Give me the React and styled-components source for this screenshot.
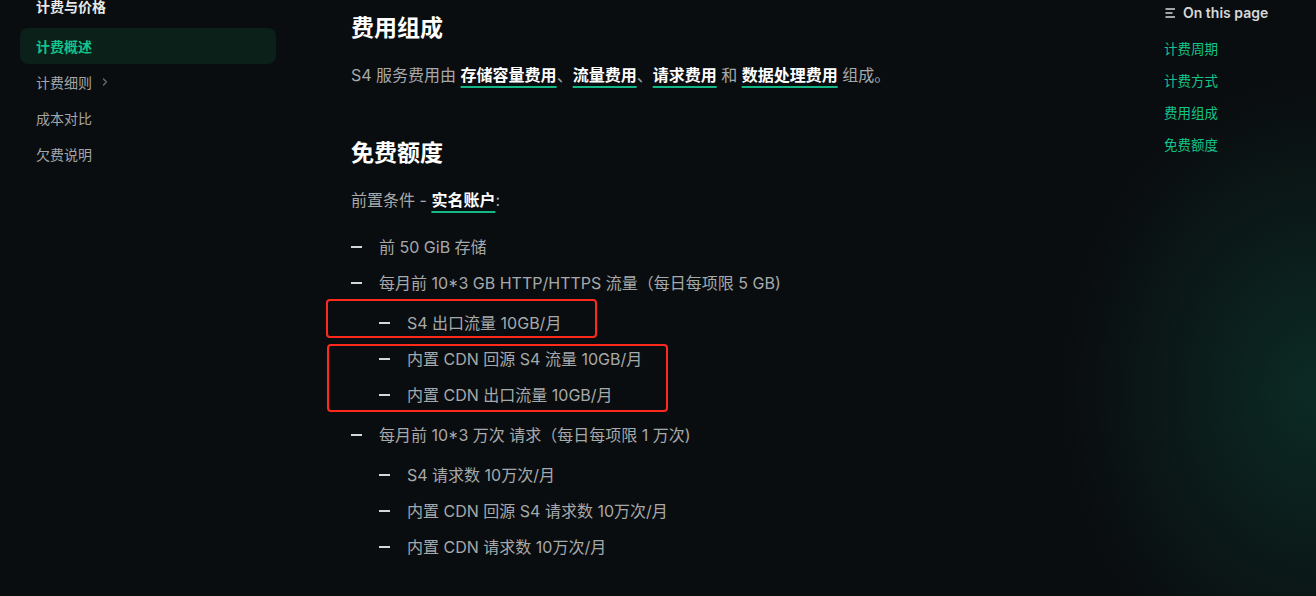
import React from "react";
import styled, { createGlobalStyle } from "styled-components";

const GlobalStyle = createGlobalStyle`
  html, body {
    margin: 0;
    padding: 0;
    background: #0a0d0f;
    overflow: hidden;
  }
  body {
    font-family: Inter, "Noto Sans CJK SC", sans-serif;
    color: #a6a9ab;
  }
  * { box-sizing: border-box; }
`;

const Page = styled.div`
  position: relative;
  width: 1316px;
  height: 596px;
  overflow: hidden;
  background:
    radial-gradient(ellipse 250px 310px at 1316px 390px, rgba(12, 44, 37, 0.95), rgba(10, 13, 15, 0) 100%),
    #0a0d0f;
  display: grid;
  grid-template-columns: 276px 1fr 152px;
`;

/**
 * SIDEBAR
 */

const Sidebar = styled.nav`
  padding-left: 20px;
  margin-top: -3px;
`;

const SideHeading = styled.div`
  font-size: 14px;
  line-height: 20px;
  font-weight: 700;
  color: #e8e8e8;
  padding-left: 16px;
  margin-bottom: 11px;
`;

const SideItem = styled.div`
  display: flex;
  align-items: center;
  gap: 8px;
  height: 36px;
  padding-left: 16px;
  border-radius: 8px;
  font-size: 14px;
  font-weight: ${(p) => (p.active ? 700 : 400)};
  color: ${(p) => (p.active ? "#12c48b" : "#a3a6a8")};
  background: ${(p) => (p.active ? "#0a2019" : "transparent")};
`;

const Chevron = () => (
  <svg width="10" height="10" viewBox="0 0 10 10" fill="none">
    <path d="M3.5 2 L6.5 5 L3.5 8" stroke="#6b6f72" strokeWidth="1.3" strokeLinecap="round" strokeLinejoin="round" />
  </svg>
);

/**
 * MAIN
 */

const Main = styled.main`
  position: relative;
  padding-left: 75px;
  padding-top: 12px;
`;

const H2 = styled.h2`
  margin: 0;
  font-size: 23px;
  line-height: 32px;
  font-weight: 700;
  color: #ffffff;
  margin-top: ${(p) => p.gap || 0}px;
`;

const Para = styled.p`
  margin: 17px 0 0;
  font-size: 16px;
  line-height: 28px;
`;

const Strong = styled.a`
  color: #ffffff;
  font-weight: 700;
  text-decoration: underline;
  text-decoration-color: #14b886;
  text-decoration-thickness: 1.5px;
  text-underline-offset: 5px;
`;

const List = styled.ul`
  list-style: none;
  margin: 0;
  padding: ${(p) => (p.nested ? "4px 0 4px 28px" : "11px 0 0")};
`;

const Item = styled.li`
  margin-top: 8px;
  font-size: 16px;
`;

const ItemLine = styled.div`
  display: flex;
  align-items: center;
  line-height: 28px;
  &::before {
    content: "";
    width: 11px;
    height: 2px;
    background: #d4d6d8;
    margin-right: 17px;
    flex: none;
  }
`;

const Annotation = styled.div`
  position: absolute;
  left: ${(p) => p.x}px;
  top: ${(p) => p.y}px;
  width: ${(p) => p.w}px;
  height: ${(p) => p.h}px;
  border: 2px solid #ff2a1c;
  border-radius: 4px;
  pointer-events: none;
`;

/**
 * TOC
 */

const Toc = styled.aside`
  padding-top: 4px;
`;

const TocHeading = styled.div`
  display: flex;
  align-items: center;
  gap: 7px;
  font-size: 14px;
  line-height: 18px;
  font-weight: 600;
  color: #d6d8da;
  margin-bottom: 17px;
  padding-left: 1px;
`;

const TocLink = styled.div`
  font-size: 13.5px;
  line-height: 20px;
  color: #12c48b;
  margin-bottom: 12px;
`;

const TocIcon = () => (
  <svg width="11" height="10" viewBox="0 0 11 10" fill="none">
    <path d="M0.5 1 H10 M0.5 5 H7.5 M0.5 9 H10" stroke="#d6d8da" strokeWidth="1.4" />
  </svg>
);

export default function App() {
  return (
    <>
      <GlobalStyle />
      <Page>
        <Sidebar>
          <SideHeading>计费与价格</SideHeading>
          <SideItem active>计费概述</SideItem>
          <SideItem>计费细则 <Chevron /></SideItem>
          <SideItem>成本对比</SideItem>
          <SideItem>欠费说明</SideItem>
        </Sidebar>

        <Main>
          <H2>费用组成</H2>
          <Para>
            S4 服务费用由 <Strong>存储容量费用</Strong>、<Strong>流量费用</Strong>、<Strong>请求费用</Strong> 和 <Strong>数据处理费用</Strong> 组成。
          </Para>

          <H2 gap={48}>免费额度</H2>
          <Para>
            前置条件 - <Strong>实名账户</Strong>:
          </Para>

          <List>
            <Item><ItemLine>前 50 GiB 存储</ItemLine></Item>
            <Item>
              <ItemLine>每月前 10*3 GB HTTP/HTTPS 流量（每日每项限 5 GB)</ItemLine>
              <List nested>
                <Item><ItemLine>S4 出口流量 10GB/月</ItemLine></Item>
                <Item><ItemLine>内置 CDN 回源 S4 流量 10GB/月</ItemLine></Item>
                <Item><ItemLine>内置 CDN 出口流量 10GB/月</ItemLine></Item>
              </List>
            </Item>
            <Item>
              <ItemLine>每月前 10*3 万次 请求（每日每项限 1 万次)</ItemLine>
              <List nested>
                <Item><ItemLine>S4 请求数 10万次/月</ItemLine></Item>
                <Item><ItemLine>内置 CDN 回源 S4 请求数 10万次/月</ItemLine></Item>
                <Item><ItemLine>内置 CDN 请求数 10万次/月</ItemLine></Item>
              </List>
            </Item>
          </List>

          <Annotation x={50} y={299} w={271} h={39} />
          <Annotation x={51} y={344} w={341} h={68} />
        </Main>

        <Toc>
          <TocHeading><TocIcon />On this page</TocHeading>
          <TocLink>计费周期</TocLink>
          <TocLink>计费方式</TocLink>
          <TocLink>费用组成</TocLink>
          <TocLink>免费额度</TocLink>
        </Toc>
      </Page>
    </>
  );
}
